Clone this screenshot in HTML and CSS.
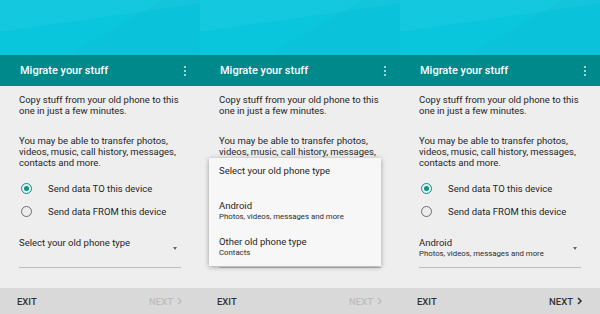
FILE: index.html
```html
<!DOCTYPE html>
<html lang="en">
<head>
    <meta charset="UTF-8">
    <meta name="viewport" content="width=device-width, initial-scale=1.0">
    <title>Migrate your stuff</title>
    <link rel="stylesheet" href="styles.css">
</head>
<body>
    <div class="screens">

        <!-- step 1: nothing picked yet -->
        <div class="phone">
            <div class="hero"></div>
            <div class="appbar">
                <span class="appbar-title">Migrate your stuff</span>
                <span class="overflow"><i></i><i></i><i></i></span>
            </div>
            <div class="content">
                <p class="intro">Copy stuff from your old phone to this one in just a few minutes.</p>
                <p class="note">You may be able to transfer photos, videos, music, call history, messages, contacts and more.</p>
                <div class="radio-row"><span class="radio checked"></span>Send data TO this device</div>
                <div class="radio-row"><span class="radio"></span>Send data FROM this device</div>
                <div class="select">
                    <div class="select-text">
                        <div class="select-title">Select your old phone type</div>
                    </div>
                    <span class="caret"></span>
                </div>
            </div>
            <div class="footer">
                <span class="btn">Exit</span>
                <span class="btn disabled">Next
                    <svg width="7" height="8" viewBox="0 0 7 8"><path d="M2 1 L5 4 L2 7" fill="none" stroke="currentColor" stroke-width="1.4"/></svg>
                </span>
            </div>
        </div>

        <!-- step 2: dropdown open -->
        <div class="phone">
            <div class="hero"></div>
            <div class="appbar">
                <span class="appbar-title">Migrate your stuff</span>
                <span class="overflow"><i></i><i></i><i></i></span>
            </div>
            <div class="content">
                <p class="intro">Copy stuff from your old phone to this one in just a few minutes.</p>
                <p class="note">You may be able to transfer photos, videos, music, call history, messages, contacts and more.</p>
                <div class="radio-row"><span class="radio checked"></span>Send data TO this device</div>
                <div class="radio-row"><span class="radio"></span>Send data FROM this device</div>
                <div class="select">
                    <div class="select-text">
                        <div class="select-title">Select your old phone type</div>
                    </div>
                    <span class="caret"></span>
                </div>
                <div class="menu">
                    <div class="menu-head">Select your old phone type</div>
                    <div class="menu-item">
                        <div class="select-title">Android</div>
                        <div class="select-sub">Photos, videos, messages and more</div>
                    </div>
                    <div class="menu-item">
                        <div class="select-title">Other old phone type</div>
                        <div class="select-sub">Contacts</div>
                    </div>
                </div>
            </div>
            <div class="footer">
                <span class="btn">Exit</span>
                <span class="btn disabled">Next
                    <svg width="7" height="8" viewBox="0 0 7 8"><path d="M2 1 L5 4 L2 7" fill="none" stroke="currentColor" stroke-width="1.4"/></svg>
                </span>
            </div>
        </div>

        <!-- step 3: android chosen -->
        <div class="phone">
            <div class="hero"></div>
            <div class="appbar">
                <span class="appbar-title">Migrate your stuff</span>
                <span class="overflow"><i></i><i></i><i></i></span>
            </div>
            <div class="content">
                <p class="intro">Copy stuff from your old phone to this one in just a few minutes.</p>
                <p class="note">You may be able to transfer photos, videos, music, call history, messages, contacts and more.</p>
                <div class="radio-row"><span class="radio checked"></span>Send data TO this device</div>
                <div class="radio-row"><span class="radio"></span>Send data FROM this device</div>
                <div class="select">
                    <div class="select-text">
                        <div class="select-title">Android</div>
                        <div class="select-sub">Photos, videos, messages and more</div>
                    </div>
                    <span class="caret"></span>
                </div>
            </div>
            <div class="footer">
                <span class="btn">Exit</span>
                <span class="btn">Next
                    <svg width="7" height="8" viewBox="0 0 7 8"><path d="M2 1 L5 4 L2 7" fill="none" stroke="currentColor" stroke-width="1.6"/></svg>
                </span>
            </div>
        </div>

    </div>
</body>
</html>
```

FILE: styles.css
```css
body {
    margin: 0;
    font-family: Roboto, "Liberation Sans", sans-serif;
    color: #1f1f1f;
    background: #eeeeee;
}
.screens {
    display: flex;
    width: 600px;
    height: 314px;
    overflow: hidden;
}
.phone {
    width: 200px;
    display: flex;
    flex-direction: column;
    background: #eeeeee;
}
.hero {
    height: 55px;
    background:
        linear-gradient(172deg, rgba(255,255,255,0.04) 0 38%, rgba(255,255,255,0) 38%),
        linear-gradient(150deg, rgba(0,0,0,0) 0 55%, rgba(0,0,0,0.02) 55%),
        #0ac6dd;
}
.appbar {
    height: 31px;
    background: #00898b;
    display: flex;
    align-items: center;
    justify-content: space-between;
    padding: 0 14px 0 20px;
}
.appbar-title {
    color: #fff;
    font-size: 11px;
    font-weight: 500;
}
.overflow {
    display: flex;
    flex-direction: column;
    gap: 2px;
}
.overflow i {
    width: 2px;
    height: 2px;
    background: #d7eeee;
    border-radius: 1px;
}
.content {
    flex: 1;
    position: relative;
    padding: 8px 19px 0 19px;
    font-size: 9.5px;
    line-height: 11px;
}
.intro {
    margin: 0;
}
.note {
    margin: 19px 0 9px 0;
}
.radio-row {
    height: 23px;
    display: flex;
    align-items: center;
    padding-left: 2px;
}
.radio {
    width: 9px;
    height: 9px;
    border: 1.5px solid #6d6d6d;
    border-radius: 50%;
    margin-right: 16px;
    position: relative;
}
.radio.checked {
    border-color: #009688;
}
.radio.checked::after {
    content: "";
    position: absolute;
    left: 2px;
    top: 2px;
    width: 5px;
    height: 5px;
    border-radius: 50%;
    background: #009688;
}
.select {
    margin-top: 14px;
    height: 30px;
    border-bottom: 1px solid #bdbdbd;
    display: flex;
    justify-content: space-between;
    align-items: flex-start;
}
.select-title {
    font-size: 9.5px;
    line-height: 11px;
}
.select-sub {
    font-size: 7.8px;
    line-height: 11px;
    color: #2b2b2b;
}
.caret {
    margin-top: 10px;
    margin-right: 4px;
    width: 0;
    height: 0;
    border-left: 2.5px solid transparent;
    border-right: 2.5px solid transparent;
    border-top: 3px solid #666;
}
.menu {
    position: absolute;
    left: 9px;
    top: 72px;
    width: 172px;
    height: 108px;
    background: #f7f7f7;
    box-shadow: 0 1px 5px rgba(0,0,0,0.35);
    padding: 7px 10px 0 10px;
    box-sizing: border-box;
}
.menu-head {
    font-size: 9.5px;
    line-height: 11px;
    margin-bottom: 24px;
}
.menu-item {
    margin-bottom: 14px;
}
.footer {
    height: 26px;
    background: #d9d9d9;
    display: flex;
    justify-content: space-between;
    align-items: center;
    padding: 0 17px 0 17px;
}
.btn {
    font-size: 9.5px;
    font-weight: 500;
    text-transform: uppercase;
    color: #333;
    display: flex;
    align-items: center;
    gap: 3px;
}
.btn.disabled {
    color: #bdbdbd;
}
```
